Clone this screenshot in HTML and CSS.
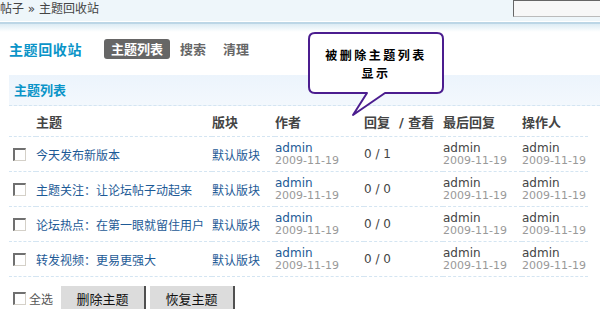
FILE: index.html
```html
<!DOCTYPE html>
<html lang="zh-CN">
<head>
<meta charset="utf-8">
<title>主题回收站</title>
<link rel="stylesheet" href="styles.css">
</head>
<body>
<div class="topbar">
  <span class="crumb">帖子 » 主题回收站</span>
  <span class="search"></span>
</div>
<div class="rule"></div>
<div class="main">
  <div class="head">
    <h1 class="title">主题回收站</h1>
    <nav class="tabs">
      <a class="tab on">主题列表</a>
      <a class="tab">搜索</a>
      <a class="tab">清理</a>
    </nav>
  </div>
  <div class="section">主题列表</div>
  <table class="list">
    <colgroup>
      <col class="c-cb"><col class="c-subj"><col class="c-forum"><col class="c-author"><col class="c-reply"><col class="c-last"><col class="c-op">
    </colgroup>
    <thead>
      <tr><th></th><th>主题</th><th>版块</th><th>作者</th><th>回复&nbsp; / 查看</th><th>最后回复</th><th>操作人</th></tr>
    </thead>
    <tbody>
      <tr>
        <td><span class="cb"></span></td>
        <td class="link">今天发布新版本</td>
        <td class="link">默认版块</td>
        <td><div class="who blue">admin</div><div class="date">2009-11-19</div></td>
        <td class="num">0 / 1</td>
        <td><div class="who">admin</div><div class="date">2009-11-19</div></td>
        <td><div class="who">admin</div><div class="date">2009-11-19</div></td>
      </tr>
      <tr>
        <td><span class="cb"></span></td>
        <td class="link">主题关注：让论坛帖子动起来</td>
        <td class="link">默认版块</td>
        <td><div class="who blue">admin</div><div class="date">2009-11-19</div></td>
        <td class="num">0 / 0</td>
        <td><div class="who">admin</div><div class="date">2009-11-19</div></td>
        <td><div class="who">admin</div><div class="date">2009-11-19</div></td>
      </tr>
      <tr>
        <td><span class="cb"></span></td>
        <td class="link">论坛热点：在第一眼就留住用户</td>
        <td class="link">默认版块</td>
        <td><div class="who blue">admin</div><div class="date">2009-11-19</div></td>
        <td class="num">0 / 0</td>
        <td><div class="who">admin</div><div class="date">2009-11-19</div></td>
        <td><div class="who">admin</div><div class="date">2009-11-19</div></td>
      </tr>
      <tr>
        <td><span class="cb"></span></td>
        <td class="link">转发视频：更易更强大</td>
        <td class="link">默认版块</td>
        <td><div class="who blue">admin</div><div class="date">2009-11-19</div></td>
        <td class="num">0 / 0</td>
        <td><div class="who">admin</div><div class="date">2009-11-19</div></td>
        <td><div class="who">admin</div><div class="date">2009-11-19</div></td>
      </tr>
    </tbody>
  </table>
  <div class="actions">
    <span class="cb"></span><span class="all">全选</span>
    <button class="btn first">删除主题</button>
    <button class="btn">恢复主题</button>
  </div>
</div>
<div class="callout">
  <svg class="bubble" width="140" height="86" viewBox="0 0 140 86">
    <path d="M7,1 H129 Q135,1 135,7 V55 Q135,61 129,61 H77 L45,83 L59,61 H7 Q1,61 1,55 V7 Q1,1 7,1 Z" fill="#fff" stroke="#4b1d8f" stroke-width="2" stroke-linejoin="round"/>
  </svg>
  <div class="bubble-text">
    <div class="bubble-line">被删除主题列表</div>
    <div class="bubble-line">显示</div>
  </div>
</div>
</body>
</html>
```

FILE: styles.css
```css
html, body {
  margin: 0;
  padding: 0;
}
body {
  width: 600px;
  height: 309px;
  overflow: hidden;
  position: relative;
  background: #fff;
  color: #444;
  font-family: "DejaVu Sans", "Noto Sans CJK SC", sans-serif;
  font-size: 12px;
}
.topbar {
  height: 21px;
  background: #eef6fa;
  display: flex;
  justify-content: space-between;
  align-items: flex-start;
}
.crumb {
  line-height: 19px;
  font-size: 12px;
  color: #444;
}
.search {
  width: 87px;
  height: 17px;
  box-sizing: border-box;
  background: #f7f7f7;
  border-top: 1px solid #666;
  border-left: 1px solid #666;
  border-bottom: 1px solid #bbb;
}
.rule {
  height: 10px;
  border-top: 1px solid #fff;
  background: linear-gradient(#bcd6e6 0, #bcd6e6 2px, #dcebf4 2px, #ffffff 100%);
}
.main {
  padding-left: 9px;
}
.head {
  display: flex;
  align-items: center;
  height: 26px;
  margin-top: 4px;
}
.title {
  margin: 0 22px 0 0;
  font-family: "Noto Sans CJK SC", sans-serif;
  font-size: 14px;
  letter-spacing: 0.6px;
  line-height: 20px;
  font-weight: bold;
  color: #0a94c8;
}
.tabs {
  display: flex;
  gap: 3px;
}
.tab {
  padding: 0 7px;
  height: 20px;
  line-height: 20px;
  font-family: "Noto Sans CJK SC", sans-serif;
  font-size: 13px;
  font-weight: bold;
  color: #666;
  border-radius: 3px;
}
.tab.on {
  background: #666;
  color: #fff;
}
.section {
  margin-top: 13px;
  height: 30px;
  line-height: 30px;
  padding-left: 5px;
  background: linear-gradient(#ecf4fc, #f3f8fd);
  font-family: "Noto Sans CJK SC", sans-serif;
  font-size: 13px;
  font-weight: bold;
  color: #0a94c8;
  border-bottom: 1px dashed #d4e5f2;
}
.list {
  width: 579px;
  table-layout: fixed;
  border-collapse: collapse;
  border-spacing: 0;
}
.c-cb { width: 27px; }
.c-subj { width: 176px; }
.c-forum { width: 63px; }
.c-author { width: 89px; }
.c-reply { width: 79px; }
.c-last { width: 79px; }
.c-op { width: 66px; }
.list th {
  height: 30px;
  padding: 0;
  text-align: left;
  font-size: 13px;
  font-weight: bold;
  color: #444;
  white-space: nowrap;
  border-bottom: 1px dashed #d4e5f2;
}
.list td {
  height: 34px;
  padding: 0;
  vertical-align: middle;
  white-space: nowrap;
  border-bottom: 1px dashed #d4e5f2;
}
.list td:first-child {
  padding-left: 4px;
}
.link {
  color: #1d5a96;
  font-family: "Noto Sans CJK SC", sans-serif;
  font-size: 12px;
}
.num {
  color: #444;
  font-size: 12px;
}
.who {
  font-size: 12px;
  line-height: 13px;
  color: #444;
}
.who.blue {
  color: #1d5a96;
}
.date {
  font-size: 11px;
  line-height: 12px;
  color: #999;
}
.cb {
  display: inline-block;
  width: 13px;
  height: 13px;
  box-sizing: border-box;
  background: #fff;
  border-top: 2px solid #707070;
  border-left: 2px solid #707070;
  border-right: 1px solid #d4d0c8;
  border-bottom: 1px solid #d4d0c8;
  vertical-align: middle;
}
.actions {
  display: flex;
  align-items: center;
  margin-top: 9px;
  padding-left: 4px;
}
.all {
  margin-left: 3px;
  font-family: "Noto Sans CJK SC", sans-serif;
  font-size: 12px;
  color: #555;
}
.btn {
  width: 85px;
  height: 24px;
  margin-left: 4px;
  padding: 0;
  background: #dcdcdc;
  border: 0;
  border-right: 2px solid #505050;
  font-family: "Noto Sans CJK SC", sans-serif;
  font-size: 13px;
  color: #111;
}
.btn.first {
  margin-left: 8px;
}
.callout {
  position: absolute;
  left: 308px;
  top: 32px;
  width: 140px;
  height: 86px;
}
.bubble {
  position: absolute;
  left: 0;
  top: 0;
}
.bubble-text {
  position: relative;
  width: 136px;
  padding-top: 14px;
  display: flex;
  flex-direction: column;
  align-items: center;
}
.bubble-line {
  height: 18px;
  line-height: 18px;
  font-family: "Noto Sans CJK SC", sans-serif;
  font-size: 12px;
  font-weight: bold;
  letter-spacing: 2.5px;
  color: #000;
}
```
